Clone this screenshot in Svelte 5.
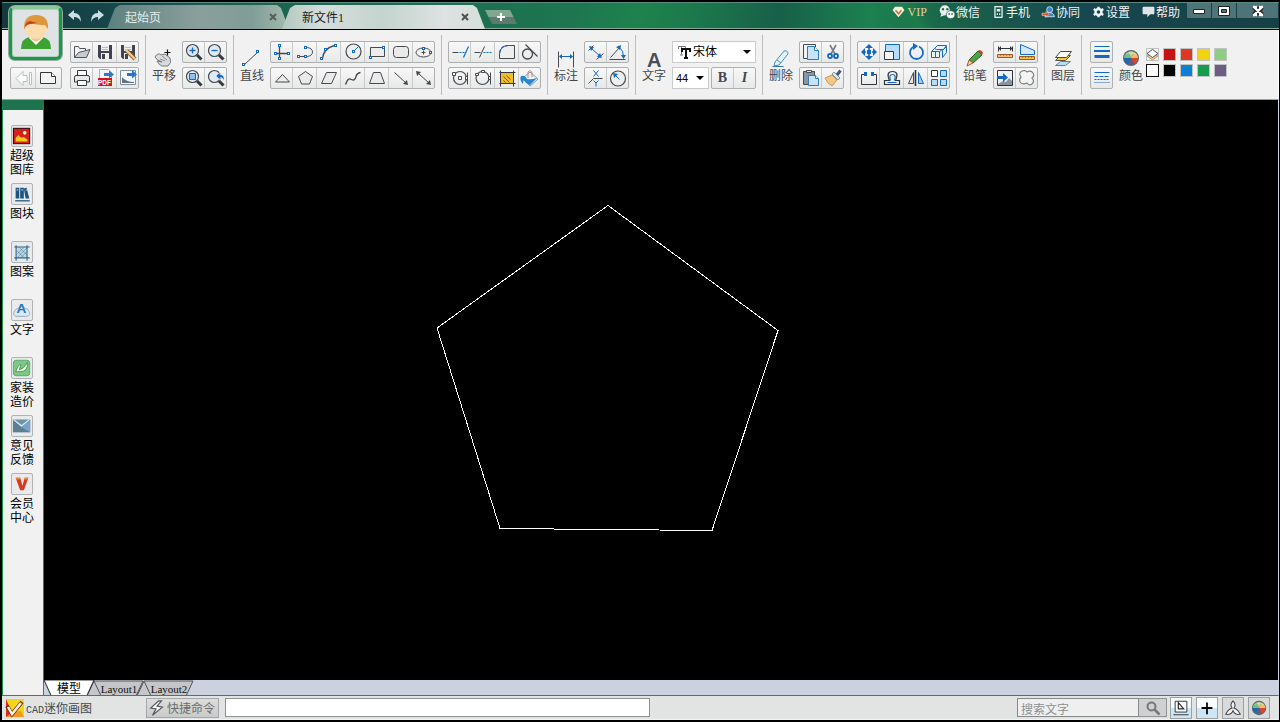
<script>
  const B = '#1268c4';
  const D = '#46494f';
  const node = (x, y) => `<rect x="${x - 0.5}" y="${y - 0.5}" width="2" height="2" fill="#fff" stroke="${B}" stroke-width="1"/>`;
  const line = (d, c = D, w = 1, extra = '') => `<path d="${d}" fill="none" stroke="${c}" stroke-width="${w}" ${Math.round(w) % 2 ? 'transform="translate(.5 .5)"' : ''} ${extra}/>`;
  const lens = `<circle cx="9.500" cy="8.500" r="6" fill="#dcebf5" stroke="#46494f" stroke-width="1.200"/><path d="M14 13l4.500 4.500" stroke="#34373c" stroke-width="3"/>`;
  const floppy = `<path d="M4 3h14v14H6l-2-2z" fill="#40434d"/><path d="M7 3h8v6H7zM7 11h8v6H7z" fill="#eef0f4"/><path d="M8 5.500h6M8 7.500h6" stroke="#b6bac6"/><path d="M8 12h3v5H8z" fill="#40434d"/>`;
  const ball = `<circle cx="11" cy="10" r="8" fill="#5d6670"/><path d="M11 10L4 10A7 7 0 0 1 8 4z" fill="#6fc27a"/><path d="M11 10L8 4A7 7 0 0 1 14 4z" fill="#b9d68a"/><path d="M11 10L14 4A7 7 0 0 1 18 10z" fill="#eebf70"/><path d="M11 10H18A7 7 0 0 1 14 16z" fill="#d9482b"/><path d="M11 10L14 16A7 7 0 0 1 8 16z" fill="#6a5a72"/><path d="M11 10L8 16A7 7 0 0 1 4 10z" fill="#1c66b8"/><path d="M5 7a7 6 0 0 1 12 0q-6-3-12 0z" fill="#fff" opacity=".35"/>`;

  const icons = {
    back: `<path d="M4 10.500l7-7v4h4v6h-4v4zM17.500 4.500v12h2v-12z" fill="#fff" stroke="#b3bfc1"/>`,
    page: `<path d="M3.500 4.500h11l4 4v7h-15z" fill="#f4f4f4" stroke="#34373c"/><path d="M14.500 4.500v4h4" fill="#fff" stroke="#34373c"/>`,
    open: `<path d="M3.500 15.500v-11h4l1 2h6v3" fill="#f4f4f4" stroke="#50545b"/><path d="M3.500 15.500l4-5 11.500-3-3.500 8z" fill="#c7ccd1" stroke="#50545b"/>`,
    save: floppy,
    saveAs: floppy + `<path d="M10 9l8 8" stroke="#8a5a32" stroke-width="4"/><path d="M9 8l9 9" stroke="#f2c885" stroke-width="2.400"/>`,
    print: `<path d="M6.500 8V2.500h9V8" fill="#fff" stroke="#34373c"/><path d="M5 7.500h12q1.500 0 1.500 2v4.500h-15V9.500q0-2 1.500-2z" fill="#e8eaec" stroke="#34373c"/><path d="M6.500 12.500h9v5h-9z" fill="#fff" stroke="#34373c"/>`,
    pdf: `<path d="M5.500 1.500h9l3 3v10h-12z" fill="#f7f7f7" stroke="#a9afb6"/><path d="M10 5h5V2.500l5 4-5 4V8h-5z" fill="#2b7bcc"/><path d="M4 10h14v8H4z" fill="#d6121b"/><text x="4" y="16.500" font-family="Liberation Sans" font-size="6.500" font-weight="700" fill="#fff">PDF</text>`,
    exportImg: `<path d="M3.500 2.500h15v14h-15z" fill="#f2f7fc" stroke="#7f8d9b"/><path d="M5 9q4 5 12 5v1H5z" fill="#64737d"/><path d="M10 5h5V2l5 4.500-5 4V8h-5z" fill="#2874cc"/>`,
    zoomIn: lens + line('M9 5v6M6 8h6', B, 1.3),
    zoomOut: lens + line('M6 8h6', B, 1.3),
    zoomFit: lens + `<path d="M6.500 5.500h6v6h-6z" fill="#8fc0ee" stroke="${B}"/>`,
    zoomBack: lens + `<path d="M11 8l4-4v2.500q5 0 4 6.500-1-3.500-4-3.500V12z" fill="${B}" stroke="#f1f1f1" stroke-width=".6"/>`,
    axis: line('M8 3v13M3 11h14', D, 1.3) + node(8, 3) + node(4, 11) + node(17, 11) + node(8, 16),
    polyline: line('M5 14h8q5-1 5-4.500T13 5h-3') + node(11, 5) + node(4, 14) + node(11, 14),
    arc: line('M4 16Q5 6 16 3', D, 1.3) + node(3, 16) + node(7, 7) + node(17, 3),
    circle: `<circle cx="11.500" cy="9.500" r="7.500" fill="#eee" stroke="${D}" stroke-width="1.200"/>` + line('M11 9l5-5', B) + node(11, 9),
    rect: `<path d="M4.500 5.500h14v9h-14z" fill="#ececec" stroke="${D}"/>` + node(4, 15) + node(17, 5),
    round: `<rect x="3.500" y="4.500" width="15" height="11" rx="3" fill="#eaeaea" stroke="${D}"/>`,
    ellipse: `<ellipse cx="10.500" cy="10.500" rx="7.500" ry="4.500" fill="#f3f3f3" stroke="${D}"/>` + line('M10 8v4M8 10h4') + node(10, 6) + node(17, 10),
    triangle: `<path d="M11.500 6.500l7 7.500h-14z" fill="#eee" stroke="${D}"/>`,
    pentagon: `<path d="M11.500 3.500l7 5-3 7.500h-8l-3-7.500z" fill="#eaeaea" stroke="${D}"/>`,
    para: `<path d="M8.500 4.500h10l-5 11h-10z" fill="#eaeaea" stroke="${D}"/>`,
    spline: line('M3 16c4-11 6-2 9-5s0-6 6-7', D, 1.4),
    trapezoid: `<path d="M7.500 4.500h7l4 11h-15z" fill="#eaeaea" stroke="${D}"/>`,
    arrow: line('M4 4l12 11') + `<path d="M18 17l-1-5-4 4z" fill="${D}"/>`,
    arrow2: line('M5 5l11 10') + `<path d="M18 17l-1-5-4 4zM3 3l1 5 4-4z" fill="${D}"/>`,
    trim: line('M3 10h6') + line('M10 10h5', B, 1.2, 'stroke-dasharray="2 1"') + line('M14 15l5-11', B, 1.2),
    extend: line('M2 10h6') + line('M7 15l5-11') + line('M11 10h8', B, 1.2, 'stroke-dasharray="2 1"'),
    fillet: `<path d="M3.500 16.500v-5q1-8 9-8h6v13z" fill="#eee" stroke="${D}"/>` + line('M3 11q1-8 9-8h3', B, 1.2, 'stroke-dasharray="4 1"'),
    tangent: `<circle cx="8.500" cy="12" r="5" fill="#eee" stroke="${D}" stroke-width="1.300"/>` + line('M6 2l12 12', D, 1.2),
    scaleC: `<circle cx="11" cy="10" r="6.500" fill="none" stroke="${D}" stroke-width="1.200"/><path d="M9.500 8.500h3v3h-3zM3.500 4.500h3v3h-3zM16.500 8.500h2v3h-2z" fill="#fff" stroke="${D}"/>` + line('M18 4v12'),
    dotsC: `<circle cx="10.500" cy="10" r="6.500" fill="none" stroke="${D}" stroke-width="1.200"/><path d="M9.500 2.500h3v2h-3zM3.500 5.500h3v2h-3zM16.500 8.500h2v3h-2z" fill="#fff" stroke="${D}"/>` + line('M18 4v12'),
    hatch: `<path d="M5 4h12v12H5z" fill="#eebd28"/>` + line('M4 2v16M17 2v16M3 4h16M3 15h16', '#34373c') + line('M7 8l6 6M10 7l4 4M7 12l2 2', '#6f5a1c'),
    bucket: `<path d="M5 9l6-5 8 7-8 7-7-7z" fill="#e9f2f8" stroke="#7d9bb1"/><path d="M2 8q4-1 6 3 4 1 10-1l-7 7q-5-2-6-5-1 1-1 4-4-4-2-8z" fill="#2887cf"/><path d="M9 10V4q3-3 4 1v4" fill="none" stroke="#d0846a"/>`,
    aligned: line('M3 8l5-5M11 17l7-6') + line('M6 6l9 8', B) + `<path d="M4 4l2 5 3-4zM17 16l-5-1 3-4z" fill="${B}"/>`,
    angle: line('M2 17h16M3 15L13 4') + line('M12 5q4 3 4 9', B) + `<path d="M9 5l5-2-1 5zM16.500 17l-2.500-4h5z" fill="${B}"/>`,
    xy: line('M3 15l5-5h9') + line('M8 2l5 6M13 2l-5 6M8 12l2.500 2.500V18M13 12l-2.500 2.500', B),
    radius: `<circle cx="11" cy="10.500" r="7.500" fill="#eee" stroke="${D}" stroke-width="1.200"/>` + line('M7 6l5 5', B) + `<path d="M6 5l1 5 4-4z" fill="${B}"/>`,
    copy: `<path d="M3.500 2.500h12v14h-12z" fill="#f2f2f2" stroke="${D}"/><path d="M7.500 4.500h7l4 4v9h-11z" fill="#c7e3fa" stroke="#2f79bd"/><path d="M14.500 4.500v4h4" fill="#fff" stroke="#2f79bd"/>`,
    cut: line('M8 3l5 9M14 3l-5 9', '#75808a', 1.6) + `<circle cx="8" cy="14" r="2" fill="#fff" stroke="${B}" stroke-width="1.800"/><circle cx="14" cy="14" r="2" fill="#fff" stroke="${B}" stroke-width="1.800"/>`,
    paste: `<path d="M3.500 3.500h11v13h-11z" fill="#8d949c" stroke="${D}"/><path d="M6.500 2.500h5v2h-5z" fill="#e3e5e8" stroke="${D}"/><path d="M8.500 7.500h7l3 3v7h-10z" fill="#c7e3fa" stroke="#2f79bd"/><path d="M15.500 7.500v3h3" fill="#fff" stroke="#2f79bd"/>`,
    brush: `<path d="M3 10l7-3 5 5-5 6q-5-3-7-8z" fill="#f0c888" stroke="#c79850"/><path d="M10 6l6 6 2-2-6-6z" fill="#e3e7ea" stroke="#8a939c"/><path d="M15 7l3.500-4.500" stroke="#3e5875" stroke-width="3"/>`,
    move: line('M11 5v3M11 12v3M6 10h2M14 10h2', B, 1.6) + `<path d="M11 2l4 4H7zM11 18l4-4H7zM3 10l4-4v8zM19 10l-4-4v8zM9 8h4v4H9z" fill="${B}"/>`,
    scale: `<path d="M4.500 2.500h14v15h-14z" fill="#b9dcf8" stroke="${B}"/><path d="M3.500 9.500h9v8h-9z" fill="#f5f5f5" stroke="#34373c"/>`,
    rotate: `<path d="M9 4.500a6.500 6.500 0 1 0 5 0" fill="none" stroke="${B}" stroke-width="1.800"/><path d="M8 1v7l5-4z" fill="${B}"/>`,
    array3d: `<path d="M3.500 9.500h8v6h-8zM6.500 6.500l3-3h9l-3 4h-7zM14.500 8.500l4-4v6l-4 5z" fill="#e7f2fb" stroke="${B}"/>` + line('M3 9l3-3M11 9l3-2M7 9v6', B),
    join: line('M8 6H3v10h15V6H14', '#34373c') + `<path d="M6 4h3v4H6zM13 4h3v4h-3z" fill="${B}"/>`,
    offset: line('M3 16h15v-4h-4q4-9-3-9T8 12H3z', '#30343a', 1.2) + line('M6 14h9M9 12q-2-6 2-6t2 6', B, 1.2),
    mirror: `<path d="M8.500 4.500v11h-5z" fill="#e8e8e8" stroke="${D}"/><path d="M13.500 4.500v11h5z" fill="#9fcef5" stroke="${B}"/>` + line('M10.500 2v16', '#30343a', 1.6),
    array: `<path d="M3.500 2.500h6v6h-6z" fill="#fff" stroke="#34373c"/><path d="M12.500 2.500h6v6h-6zM12.500 11.500h6v6h-6zM3.500 11.500h6v6h-6z" fill="#b7dbf7" stroke="${B}"/>`,
    ruler: line('M4 4v5M18 4v5M5 6h12', '#30343a') + `<path d="M7 4L4.500 6.500 7 9zM16 4l2.500 2.500L16 9z" fill="#30343a"/><path d="M3.500 12.500h15v3h-15z" fill="#f0c26b" stroke="#a5512c"/>` + line('M6 12v1M9 12v1M12 12v1M15 12v1', '#8a451f'),
    area: `<path d="M4.500 2.500v10h14v-4z" fill="#d2e9fb" stroke="${B}"/><path d="M3.500 14.500h15v3h-15z" fill="#f0c23b" stroke="#9e5c1e"/>` + line('M6 14v1M9 14v1M12 14v1M15 14v1', '#8a451f'),
    insertImg: `<path d="M3.500 2.500h15v15h-15z" fill="#eef1f4" stroke="#30343a"/><path d="M4 16l5-3 3 1 3-4 3 3v4H4z" fill="#8b949d"/><path d="M3 8h6V5l5 4.500-5 4.500v-3H3z" fill="${B}"/>`,
    cloud: `<path d="M5 9q-3-4 1-6 4-1 5 1 4-2 6 1 2 3-1 5 3 3 0 6-3 2-5-1-5 2-7-1-1-3 1-5z" fill="#f4f4f4" stroke="#7c8082" stroke-width="1.200"/>`,
    thick: line('M3 4h15', B) + line('M3 9h16', B, 2) + line('M3 14h15', B, 3),
    dashes: line('M3 4h15', B) + line('M3 8h15', B, 1, 'stroke-dasharray="4 1"') + line('M3 11h15', B, 1, 'stroke-dasharray="2 1"') + line('M3 14h15', B, 1, 'stroke-dasharray="1 1"'),
    pan: `<path d="M2 9q3-5 6-2l4-1 5 4q2 5-2 8h-6q-3-1-5-5l5 1q-6-2-7-5z" fill="#d9dbdc" stroke="#75797c"/><path d="M7 11l5 2M9 8l5 4" stroke="#8a8d90"/>` + line('M14 1v6M11 4h6', '#111', 1.2),
    segment: line('M3 16L17 3') + node(2, 16) + node(16, 3),
    dim: line('M3 3v16M18 3v16', D) + line('M5 8h12', B) + `<path d="M4 8.500l3-2.500v5zM18 8.500L15 6v5z" fill="${B}"/>`,
    letter: `<text x="4" y="18.500" font-family="Liberation Sans" font-size="20" font-weight="700" fill="#4b4e54">A</text>`,
    erase: `<path d="M5 14L14 3q4-1 4 3L9 17l-5 1z" fill="#e3f1fb" stroke="#4a8fc4"/><path d="M7 12l4 3" stroke="#4a8fc4"/>` + line('M2 18h11', '#3576b1'),
    pencil: `<path d="M5 12L14 3l4 4-9 8z" fill="#4fa245" stroke="#2b6230"/><path d="M5 12l4 3-6 3z" fill="#f6d59d" stroke="#b15332"/><path d="M14 3l1-1q3 0 4 3l-1 2z" fill="#cc4439"/>`,
    layers: `<path d="M3.500 17.500l5-4h10l-5 4z" fill="#bedaf0" stroke="#628097"/><path d="M3.500 12.500l5-5h10l-5 5z" fill="#f4ca31" stroke="#57544d"/><path d="M3.500 9.500l5-6h11l-5 6z" fill="#fff" stroke="#44484d"/>`,
    ball,
    gallery: `<path d="M1 1h19v18H1z" fill="#111"/><path d="M2 2h17v16H2z" fill="#d4211c"/><path d="M4 16v-4l3-3 3 3 3-1 4 3v2z" fill="#f4cb18"/><circle cx="14" cy="6.500" r="2" fill="#fff4d9"/>`,
    books: `<path d="M4 3h4v12H4zM9 3h4v12H9zM13 4l3-1 3 12h-4z" fill="#1d557f"/><path d="M5 5.500h2M10 5.500h2M15 6l2-1" stroke="#c0d9e8"/>` + line('M3 17h16', '#1d557f', 1.4),
    grid: `<path d="M5 4h12v12H5z" fill="#c2dae2"/>` + line('M4 2v17M16 2v17M2 4h17M2 16h17', '#2f658c', 1.2) + line('M5 12l7-7M5 16L16 5M9 16l7-7M5 8l8 8M8 5l8 8', '#407596', 0.6),
    cloudA: `<path d="M4 17q-4-2-1-6 2-3 4-3 2-4 7 0 4 0 5 4 2 4-3 5z" fill="#d9e9f5" stroke="#93a9bb"/><text x="5" y="13" font-family="Liberation Sans" font-size="15" font-weight="700" fill="#1e79be">A</text>`,
    leaf: `<rect x="1.500" y="1.500" width="18" height="17" rx="3" fill="#7cc887" stroke="#5ba868"/><path d="M4 14q3-8 6-8l-2 6q5-1 9-8 1 10-8 10-3 0-5 0z" fill="#e9f8df" stroke="#4d945a"/>`,
    mail: `<path d="M1 3h19v14H1z" fill="#5c7f96"/><path d="M1 3h19l-9.500 8z" fill="#d9e8ef"/><path d="M3 3h15l-7.500 6z" fill="#6d92a8"/><path d="M10 11l10-7v13z" fill="#78a4cb"/>`,
    vee: `<path d="M4 3h5l2.500 9L14 3h4l-5 14H9z" fill="#d93820"/><path d="M4 3h5v2H5zM14 3h4l-1 2h-3z" fill="#e78a38"/>`,
    search: `<circle cx="9.500" cy="8.500" r="4" fill="none" stroke="#74787a" stroke-width="2"/><path d="M12.500 11.500l5 5" stroke="#74787a" stroke-width="2.500"/>`,
    ortho: `<path d="M4.500 2.500h13v12h-13z" fill="#fff" stroke="#25282c"/><path d="M8 4v7h6z" fill="none" stroke="#25282c" stroke-width="1.300"/>` + line('M2 17h17', '#25282c'),
    cross: line('M11 4v13M5 10h12', '#050505', 2),
    fan: `<path d="M11 2q4 4 1 8 5 2 7 7-6 1-8-4-2 5-8 4 2-5 7-7-3-4 1-8z" fill="#f2f2f2" stroke="#46494f" stroke-width="1.200"/>`,
    gem: `<path d="M5 1h12l4 6-10 12L1 7z" fill="#f5efe1"/><path d="M6 7l5 6 5-6" fill="none" stroke="#b8743c" stroke-width="2.400"/>`,
    wechat: `<circle cx="8" cy="7" r="7" fill="#e8f0ee"/><path d="M3 12l-1 4 5-2z" fill="#e8f0ee"/><ellipse cx="16" cy="13" rx="6" ry="5.500" fill="#f6faf8" stroke="#205840"/><path d="M4 4h3v3H4zM10 4h3v3h-3zM13 11h2v2h-2zM17 11h2v2h-2z" fill="#205840"/>`,
    phone: `<rect x="5" y="1" width="12" height="18" fill="none" stroke="#fff" stroke-width="2"/><path d="M8 5h6v4H8zM8 12h2v3H8zM12 12h2v3h-2z" fill="#e8f0ee"/>`,
    people: `<circle cx="13" cy="6" r="5" fill="#3f85c6" stroke="#cfe6f7" stroke-width="1.500"/><path d="M5 18q1-7 8-7t8 7z" fill="#3f85c6" stroke="#cfe6f7" stroke-width="1.500"/><path d="M0 12h7V9l5 5-5 5v-3H0z" fill="#d3552d" stroke="#f3d9c8"/>`,
    gear: `<circle cx="11" cy="10" r="5" fill="none" stroke="#eef3f3" stroke-width="4"/><path d="M11 1v3M11 16v3M3 5l3 2M16 13l3 2M3 15l3-2M16 7l3-2" stroke="#eef3f3" stroke-width="4"/>`,
    bubble: `<path d="M3 1h16q2 0 2 2v9q0 2-2 2h-5l-5 5v-5H3q-2 0-2-2V3q0-2 2-2z" fill="#e0e4e6"/>`,
    bolt: `<path d="M13 2L4 10l6 1-4 7L17 9l-6-1 5-6z" fill="#fff" stroke="#55595c" stroke-width="1.300"/>`
  };

  const groups = [
    { blocks: [
      { avatar: true, rows: [[], [['back', '上一步'], ['page', '新建']]] },
      { rows: [[['open', '打开'], ['save', '保存'], ['saveAs', '另存为']], [['print', '打印'], ['pdf', '输出PDF'], ['exportImg', '输出图片']]] }
    ] },
    { label: '平移', icon: 'pan', blocks: [{ rows: [[['zoomIn', '放大'], ['zoomOut', '缩小']], [['zoomFit', '窗口缩放'], ['zoomBack', '上次视图']]] }] },
    { label: '直线', icon: 'segment', blocks: [{ rows: [
      [['axis', '构造线'], ['polyline', '多段线'], ['arc', '圆弧'], ['circle', '圆'], ['rect', '矩形'], ['round', '圆角矩形'], ['ellipse', '椭圆']],
      [['triangle', '三角形'], ['pentagon', '多边形'], ['para', '平行四边形'], ['spline', '样条曲线'], ['trapezoid', '梯形'], ['arrow', '箭头'], ['arrow2', '双向箭头']]] }] },
    { blocks: [{ rows: [[['trim', '修剪'], ['extend', '延伸'], ['fillet', '圆角'], ['tangent', '切线']], [['scaleC', '捕捉圆心'], ['dotsC', '捕捉象限点'], ['hatch', '图案填充'], ['bucket', '颜色填充']]] }] },
    { label: '标注', icon: 'dim', blocks: [{ rows: [[['aligned', '对齐标注'], ['angle', '角度标注']], [['xy', '坐标标注'], ['radius', '半径标注']]] }] },
    { label: '文字', icon: 'letter', font: true, blocks: [] },
    { label: '删除', icon: 'erase', blocks: [{ rows: [[['copy', '复制'], ['cut', '剪切']], [['paste', '粘贴'], ['brush', '格式刷']]] }] },
    { blocks: [{ rows: [[['move', '移动'], ['scale', '缩放'], ['rotate', '旋转'], ['array3d', '三维阵列']], [['join', '合并'], ['offset', '偏移'], ['mirror', '镜像'], ['array', '阵列']]] }] },
    { label: '铅笔', icon: 'pencil', blocks: [{ rows: [[['ruler', '测量距离'], ['area', '测量面积']], [['insertImg', '插入图片'], ['cloud', '云线']]] }] },
    { label: '图层', icon: 'layers', blocks: [] }
  ];

  const swatches = ['layers', '#c81216', '#dc3824', '#f3d216', '#8fcd82', '#ffffff', '#000000', '#0f7fd2', '#169c4a', '#6e5d82'];

  const menu = [['gem', 'VIP'], ['wechat', '微信'], ['phone', '手机'], ['people', '协同'], ['gear', '设置'], ['bubble', '帮助']];

  const side = [['gallery', '超级图库'], ['books', '图块'], ['grid', '图案'], ['cloudA', '文字'], ['leaf', '家装造价'], ['mail', '意见反馈'], ['vee', '会员中心']];

  const modes = [['ortho', '正交', true], ['cross', '十字光标', true], ['fan', '捕捉', false], ['ball', '背景颜色', false]];

  let color = $state('#ffffff');
</script>

{#snippet glyph(name, cls = 'glyph')}
  <svg class={cls} viewBox="0 0 22 20" aria-hidden="true">{@html icons[name]}</svg>
{/snippet}

<div class="window">
  <header>
    <div class="history">
      <button aria-label="撤销"><svg viewBox="0 0 16 14"><path d="M1 6l6-5v3q7 0 7 9-2-5-7-5v3z" fill="#c9dfe6" /></svg></button>
      <button aria-label="重做"><svg viewBox="0 0 16 14"><path d="M15 6L9 1v3q-7 0-7 9 2-5 7-5v3z" fill="#c9dfe6" /></svg></button>
    </div>
    <nav class="tabs">
      <div class="tab"><a href="#start">起始页</a><button aria-label="关闭起始页"><svg viewBox="0 0 8 8"><path d="M1 1l6 6M7 1L1 7" stroke="#5b5b5b" stroke-width="2" /></svg></button></div>
      <div class="tab current"><a href="#file">新文件1</a><button aria-label="关闭新文件1"><svg viewBox="0 0 8 8"><path d="M1 1l6 6M7 1L1 7" stroke="#4f4f4f" stroke-width="2" /></svg></button></div>
      <button class="add" aria-label="新建标签"><svg viewBox="0 0 10 10"><path d="M5 1v8M1 5h8" stroke="#fff" stroke-width="2" /></svg></button>
    </nav>
    <nav class="menu">
      {#each menu as [icon, text]}
        <a href="#{icon}" class:vip={icon === 'gem'} class:wide={icon === 'wechat'}>{@render glyph(icon, 'mini')}{text}</a>
      {/each}
    </nav>
    <div class="controls">
      <button aria-label="最小化"><svg viewBox="0 0 14 12"><path d="M1.500 4.500h11v4h-11z" fill="#fff" stroke="#222" /></svg></button>
      <button aria-label="最大化"><svg viewBox="0 0 14 12"><path d="M1.500 1.500h11v9h-11zM4.500 4.500h5v3h-5z" fill="#fff" stroke="#222" fill-rule="evenodd" /></svg></button>
      <button class="close" aria-label="关闭"><svg viewBox="0 0 14 12"><path d="M3 2l8 8M11 2l-8 8" stroke="#222" stroke-width="5" /><path d="M3 2l8 8M11 2l-8 8M2 2h4M8 2h4M2 10h4M8 10h4" stroke="#fff" stroke-width="2.400" /></svg></button>
    </div>
  </header>

  <div class="toolbar">
    {#each groups as group}
      <section>
        {#if group.label}
          <button class="big">{@render glyph(group.icon, 'large')}<span>{group.label}</span></button>
        {/if}
        {#if group.font}
          <div class="fonts">
            <label class="picker">
              <svg viewBox="0 0 14 14" aria-hidden="true"><path d="M1.500 4V1.500h7V3M4.500 2v8M3 10h3" fill="none" stroke="#777" /><path d="M5 7V4h8v3M9 4v9M7 13h4" fill="none" stroke="#111" stroke-width="2" /></svg>
              <select aria-label="字体"><option>宋体</option><option>黑体</option></select>
            </label>
            <div class="sizes">
              <label class="picker size"><select aria-label="字号"><option>44</option><option>72</option></select></label>
              <div class="strip"><button class="bold">B</button><button class="italic">I</button></div>
            </div>
          </div>
        {/if}
        {#each group.blocks as block}
          <div class="block">
            {#each block.rows as row, i}
              {#if block.avatar && i === 0}
                <div class="slot">
                  <button class="avatar" aria-label="账户">
                    <svg viewBox="0 0 40 40">
                      <path d="M5 36q0-11 9-12h12q9 1 9 12z" fill="#3da22f" />
                      <path d="M13 25l7 7 7-7-2-3H15z" fill="#fff" />
                      <path d="M15 20h10v6l-5 3-5-3z" fill="#f1c48c" />
                      <ellipse cx="20" cy="15" rx="11" ry="11" fill="#fadcae" />
                      <path d="M8 17Q7 2 20 2t12 14l-3-4q-9 0-14-2-5 1-7 7z" fill="#dd983c" />
                      <path d="M9 14q0-5 5-6l7 2-6 1q-4 0-6 3z" fill="#cf3d20" />
                    </svg>
                  </button>
                </div>
              {:else}
                <div class="strip" class:wide={block.avatar}>
                  {#each row as [icon, text]}
                    <button aria-label={text}>{@render glyph(icon)}</button>
                  {/each}
                </div>
              {/if}
            {/each}
          </div>
        {/each}
      </section>
    {/each}
    <section>
      <div class="block">
        <div class="strip"><button class="single" aria-label="线宽">{@render glyph('thick')}</button></div>
        <div class="strip"><button class="single" aria-label="线型">{@render glyph('dashes')}</button></div>
      </div>
      <button class="big">{@render glyph('ball', 'large')}<span>颜色</span></button>
      <div class="palette">
        {#each swatches as item}
          {#if item === 'layers'}
            <button aria-label="随层"><svg viewBox="0 0 11 11"><path d="M0 7l5.500 4L11 7 5.500 4z" fill="#f1c98c" stroke="#b89c72" /><path d="M0 4.500l5.500 4 5.500-4-5.500-4z" fill="#fff" stroke="#50545a" /></svg></button>
          {:else}
            <button class:chosen={item === color} style:background={item} aria-label={item} onclick={() => (color = item)}></button>
          {/if}
        {/each}
      </div>
    </section>
  </div>

  <main>
    <aside>
      {#each side as [icon, text]}
        <button><span class="tile">{@render glyph(icon)}</span><span class="name">{text}</span></button>
      {/each}
    </aside>
    <div class="work">
      <div class="canvas">
        <svg shape-rendering="crispEdges" role="img" aria-label="五边形"><path d="M564 105.500L734 230.500 668 430.500 456 428.500 393 228z" fill="none" stroke="#fff" /></svg>
      </div>
      <nav class="sheets">
        <a href="#model" class="active"><svg viewBox="0 0 48 16" preserveAspectRatio="none" aria-hidden="true"><path d="M0 0L7 16H41L48 0z" fill="#fff" stroke="#333" /></svg><span>模型</span></a>
        <a href="#layout1"><svg viewBox="0 0 58 16" preserveAspectRatio="none" aria-hidden="true"><path d="M1 16L8 1H57L50 16z" fill="#c4c6ca" stroke="#555" /><path d="M8 1l7 15" stroke="#555" /></svg><span>Layout1</span></a>
        <a href="#layout2"><svg viewBox="0 0 58 16" preserveAspectRatio="none" aria-hidden="true"><path d="M1 16L8 1H57L50 16z" fill="#c4c6ca" stroke="#555" /><path d="M8 1l7 15" stroke="#555" /></svg><span>Layout2</span></a>
      </nav>
    </div>
  </main>

  <footer>
    <div class="brand">
      <svg viewBox="0 0 18 18" aria-hidden="true"><path d="M0 0h18v18H0z" fill="#f3d615" /><path d="M0 0v18h8z" fill="#d82b1e" /><path d="M0 18h18l-3-6-8 1z" fill="#ed9a1f" /><path d="M1 7l5 8L16 3" fill="none" stroke="#7c2b12" stroke-width="4" /><path d="M2 8l4 7L15 4" fill="none" stroke="#fff3df" stroke-width="2.500" /></svg>
      <span><span class="latin">CAD</span>迷你画图</span>
    </div>
    <button class="quick">{@render glyph('bolt')}快捷命令</button>
    <input class="command" aria-label="命令" />
    <div class="find"><input placeholder="搜索文字" aria-label="搜索文字" /><button aria-label="搜索">{@render glyph('search')}</button></div>
    <div class="modes">
      {#each modes as [icon, text, on]}
        <button class:on aria-label={text}>{@render glyph(icon)}</button>
      {/each}
    </div>
  </footer>
</div>

<style>
  :global(body) { margin: 0; background: #000; }
  .window, .window button, .window input, .window select {
    font-family: "Liberation Serif", "Noto Sans CJK SC", sans-serif;
    font-size: 12px;
  }
  .window {
    box-sizing: border-box;
    min-height: 100vh;
    display: flex;
    flex-direction: column;
    border: solid #000;
    border-width: 2px 1px 2px 2px;
    background: #f1f1f1;
    color: #44474b;
  }
  button { box-sizing: border-box; padding: 0; border: 0; background: none; color: inherit; cursor: pointer; }
  a { color: inherit; text-decoration: none; }
  svg { display: block; flex: none; overflow: visible; }
  .glyph { width: 22px; height: 20px; }

  header {
    display: flex;
    height: 28px;
    box-sizing: border-box;
    border-top: 1px solid #5b8a80;
    border-bottom: 1px solid #000;
    box-shadow: inset 0 -1px #86aa99;
    background:
      linear-gradient(51deg, transparent 69%, #1f8f4a66 71%, transparent 72%),
      linear-gradient(125deg, transparent 45%, #1c8a4980 50%, transparent 60%),
      linear-gradient(90deg, #12393e 0%, #194b50 12%, #1b6350 20%, #1c6d51 34%, #1f7a50 50%, #176049 61%, #1c8150 68%, #19604a 75%, #174750 85%, #173f46 100%);
  }
  .history { display: flex; align-items: center; gap: 6px; padding-left: 65px; }
  .history svg { width: 16px; height: 14px; }
  .tabs { display: flex; align-items: flex-end; padding-left: 2px; }
  .tab {
    display: flex;
    align-items: center;
    justify-content: space-between;
    box-sizing: border-box;
    width: 182px;
    height: 24px;
    padding: 0 12px 0 18px;
    clip-path: polygon(0 100%, 8px 12%, 13px 0, calc(100% - 12px) 0, calc(100% - 8px) 12%, 100% 100%);
    background: linear-gradient(90deg, #5c817f, #8a9f9c 50%, #809d98 80%, #a3bcae);
    color: #e3ecea;
  }
  .tab.current {
    width: 203px;
    margin-left: -7px;
    padding: 0 16px 0 20px;
    background: linear-gradient(90deg, #b3c9bf, #d5dedc 20%, #c4d4ce 50%, #dee2e2 80%, #d5dfda);
    color: #222;
  }
  .tab svg { width: 8px; height: 8px; }
  .add {
    display: flex;
    align-items: center;
    justify-content: center;
    align-self: center;
    width: 32px;
    height: 14px;
    margin-top: 2px;
    clip-path: polygon(0 0, 25px 0, 100% 100%, 7px 100%);
    background: linear-gradient(#7fa88f 50%, #5d7a70 50%);
  }
  .add svg { width: 10px; height: 10px; }
  .menu { display: flex; align-items: center; gap: 12px; height: 18px; margin-left: auto; padding-right: 7px; color: #f0f4f3; }
  .menu a { display: flex; align-items: center; gap: 1px; }
  .menu .vip { gap: 3px; color: #e5cfa0; }
  .mini { width: 13px; height: 12px; }
  .menu .wide .mini { width: 16px; height: 15px; }
  .controls { display: flex; gap: 1px; height: 15px; margin-right: 1px; }
  .controls button { display: flex; align-items: center; justify-content: center; width: 24px; background: #4f7478; }
  .controls svg { width: 14px; height: 12px; }
  .controls .close { width: 41px; }

  .toolbar {
    display: flex;
    align-items: center;
    box-sizing: border-box;
    height: 70px;
    border-bottom: 1px solid #9a9fa0;
    border-right: 1px solid #fff;
    background: #f1f1f1;
  }
  section {
    display: flex;
    align-items: center;
    gap: 6px;
    box-sizing: border-box;
    height: 60px;
    padding: 0 6px;
    border-right: 1px solid #bcbcbc;
  }
  section:first-child { gap: 8px; padding-left: 8px; }
  section:last-child { padding-left: 8px; border-right: 0; }
  .block { display: flex; flex-direction: column; gap: 4px; }
  .strip {
    display: flex;
    box-sizing: border-box;
    height: 22px;
    border: 1px solid #adb0b1;
    border-radius: 2px;
    background: linear-gradient(#f8f8f8, #e7e8e8);
  }
  .strip button {
    display: flex;
    align-items: center;
    justify-content: flex-start;
    width: 24px;
    padding-left: 1px;
    border-right: 1px solid #c8caca;
  }
  .strip button:first-child { width: 22px; padding-left: 0; }
  .strip button:last-child { width: 21px; padding-left: 0; border-right: 0; }
  .strip.wide button { width: 25px; padding-left: 1px; }
  .slot { position: relative; height: 22px; }
  .avatar {
    position: absolute;
    left: -1px;
    top: -35px;
    z-index: 2;
    display: flex;
    align-items: center;
    justify-content: center;
    width: 53px;
    height: 54px;
    border: 3px solid #169b48;
    border-top-color: #8cc79a;
    border-radius: 6px;
    box-shadow: inset 0 0 0 1px #b4cfbd, 0 0 0 1px #9aa8a0;
    background: #dfe3e6;
  }
  .avatar svg { width: 40px; height: 42px; }
  .big { display: flex; flex-direction: column; align-items: center; width: 24px; padding-top: 2px; line-height: 16px; white-space: nowrap; }
  .large { width: 22px; height: 20px; }
  .fonts, .sizes { display: flex; gap: 4px; }
  .fonts { flex-direction: column; }
  .sizes { gap: 2px; }
  .picker {
    display: flex;
    align-items: center;
    box-sizing: border-box;
    height: 22px;
    width: 84px;
    padding: 0 4px;
    border: 1px solid #c9cbcb;
    background: #fff;
    color: #000;
  }
  .picker svg { width: 14px; height: 14px; }
  .picker select {
    appearance: none;
    flex: 1;
    min-width: 0;
    padding: 0 0 0 2px;
    border: 0;
    background: none;
    color: inherit;
  }
  .picker::after { content: ""; border: 4px solid transparent; border-top-color: #000; border-bottom: 0; }
  .picker.size { width: 37px; }
  .picker.size { padding: 0 4px 0 1px; }
  .window .size select { font-family: "Liberation Sans", sans-serif; font-size: 11px; }
  .window .bold, .window .italic { justify-content: center; font-weight: 700; font-size: 14px; }
  .italic { font-style: italic; }
  .strip .single:first-child { width: 21px; }
  .palette { display: grid; grid-template-columns: repeat(5, 13px); gap: 3px 4px; margin-left: -3px; padding-bottom: 4px; }
  .palette button { display: flex; width: 13px; height: 13px; border: 1px solid #bfc3c3; }
  .palette svg { width: 11px; height: 11px; }
  .palette .chosen { border-color: #111; }

  main { flex: 1; display: flex; border-bottom: 1px solid #2a8c54; border-right: 1px solid #cfd6e2; }
  aside {
    display: flex;
    flex-direction: column;
    gap: 8px;
    width: 38px;
    padding: 15px 2px 0 0;
    border: solid #16924a;
    border-width: 10px 1px 0;
    border-top-color: #1c734d;
    background: #f1f1f1;
    color: #000;
  }
  aside button { display: flex; flex-direction: column; align-items: center; gap: 2px; height: 50px; }
  .tile {
    display: flex;
    align-items: center;
    justify-content: center;
    box-sizing: border-box;
    width: 22px;
    height: 22px;
    border: 1px solid #b0b3b4;
    border-radius: 2px;
    background: #e9eaeb;
  }
  .tile .glyph { width: 20px; height: 20px; }
  .name { width: 24px; line-height: 14px; }
  .work { flex: 1; display: flex; flex-direction: column; background: #000; }
  .canvas { flex: 1; display: flex; }
  .canvas svg { width: 100%; height: 100%; flex: 1; }
  .sheets { display: flex; height: 15px; overflow: hidden; background: #cbd1de; color: #111; }
  .sheets a { position: relative; display: flex; justify-content: center; box-sizing: border-box; width: 58px; margin-left: -8px; padding-left: 8px; line-height: 18px; font-size: 11px; }
  .sheets a.active { z-index: 1; width: 50px; margin-left: 0; padding-left: 0; font-size: 12px; color: #000; }
  .sheets svg { position: absolute; inset: 0; width: 100%; height: 16px; }
  .sheets span { position: relative; }

  footer {
    display: flex;
    align-items: center;
    height: 23px;
    padding: 0 9px 0 4px;
    border-bottom: 1px solid #f3f3f3;
    background: #e2e3e3;
  }
  .brand { display: flex; align-items: center; gap: 2px; width: 140px; }
  .brand svg { width: 18px; height: 18px; }
  .latin { font-family: "Liberation Mono", monospace; font-size: 10px; }
  .quick {
    display: flex;
    align-items: center;
    height: 20px;
    padding: 0 3px 0 0;
    border: 1px solid #a5a8a9;
    background: linear-gradient(#dcdddd, #c9cbcb);
    color: #6a6d6f;
  }
  .quick .glyph { width: 20px; height: 18px; }
  .command { box-sizing: border-box; width: calc(34% - 5px); height: 19px; margin-left: 6px; border: 1px solid #8e9192; background: #fff; }
  .find { display: flex; margin-left: auto; height: 19px; }
  .find input { box-sizing: border-box; width: 122px; padding: 2px 3px 0; border: 1px solid #85898a; background: #efefef; }
  .window .find input { font-family: "Noto Sans CJK SC", sans-serif; }
  .find input::placeholder { color: #8c8f91; opacity: 1; }
  .find button { display: flex; align-items: center; justify-content: center; width: 28px; border: 1px solid #8f9394; border-left: 0; background: #cfd1d1; }
  .modes { display: flex; gap: 4px; padding-left: 3px; }
  .modes button { display: flex; align-items: center; justify-content: center; width: 22px; height: 22px; border: 1px solid #9da1a3; background: #d9dadb; }
  .modes .on { background: linear-gradient(#f8fbfd 50%, #cde6f5 50%); }
  .modes .glyph { width: 20px; height: 18px; }
</style>
